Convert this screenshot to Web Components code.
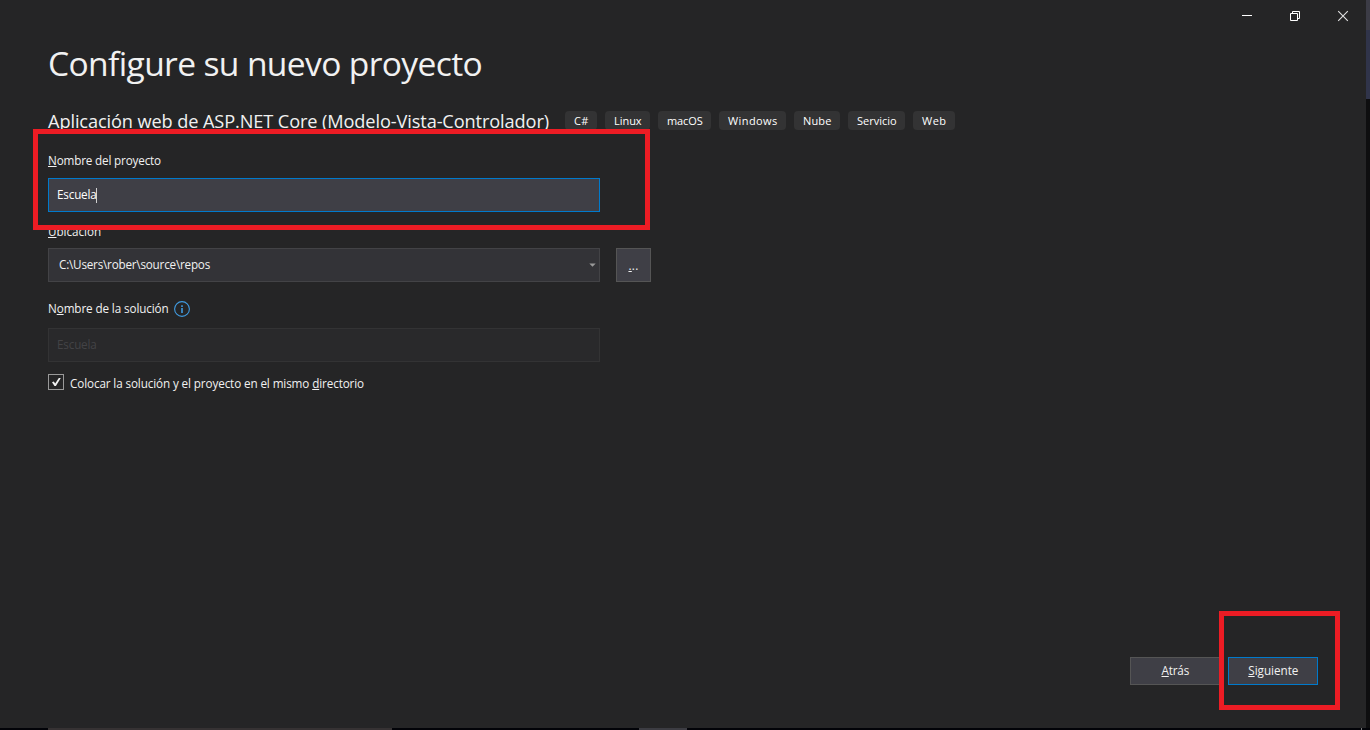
<!DOCTYPE html>
<html lang="es">
<head>
<meta charset="utf-8">
<title>Configure su nuevo proyecto</title>
<style>
html,body{margin:0;height:100%;overflow:hidden;background:#020308}
body{font-family:"Open Sans","Noto Sans",sans-serif;font-size:11.7px;line-height:16px;color:#f1f1f1}
u{text-decoration-thickness:1px;text-underline-offset:1px;text-decoration-skip-ink:none}
</style>
</head>
<body>
<desktop-frame>
<project-dialog>
  <window-controls slot="controls"></window-controls>
  <fit-text slot="title" width="433.5">Configure su nuevo proyecto</fit-text>
  <fit-text slot="subtitle" width="500.4">Aplicación web de ASP.NET Core (Modelo-Vista-Controlador)</fit-text>
  <tag-chip slot="tags" style="width:32px"><fit-text width="14">C#</fit-text></tag-chip>
  <tag-chip slot="tags" style="width:45px"><fit-text width="27">Linux</fit-text></tag-chip>
  <tag-chip slot="tags" style="width:53px"><fit-text width="35">macOS</fit-text></tag-chip>
  <tag-chip slot="tags" style="width:67px"><fit-text width="49">Windows</fit-text></tag-chip>
  <tag-chip slot="tags" style="width:46px"><fit-text width="28">Nube</fit-text></tag-chip>
  <tag-chip slot="tags" style="width:57px"><fit-text width="39">Servicio</fit-text></tag-chip>
  <tag-chip slot="tags" style="width:42px"><fit-text width="24">Web</fit-text></tag-chip>

  <form-field style="--gap:9px">
    <fit-text slot="label" width="112.4"><u>N</u>ombre del proyecto</fit-text>
    <text-box focused><fit-text width="39">Escuela</fit-text></text-box>
  </form-field>
  <form-field style="--gap:8px;margin-top:12px">
    <fit-text slot="label" width="52.5"><u>U</u>bicación</fit-text>
    <text-box combo><fit-text width="150.4">C:\Users\rober\source\repos</fit-text></text-box>
    <push-button style="width:35px;height:34px;letter-spacing:.3px"><u>.</u>..</push-button>
  </form-field>
  <form-field style="--gap:11px;margin-top:19px">
    <fit-text slot="label" width="120">N<u>o</u>mbre de la solución</fit-text>
    <info-icon slot="label"></info-icon>
    <text-box disabled><fit-text width="39">Escuela</fit-text></text-box>
  </form-field>
  <check-box><fit-text width="293.4">Colocar la solución y el proyecto en el mismo <u>d</u>irectorio</fit-text></check-box>

  <push-button slot="actions"><fit-text width="27"><u>A</u>trás</fit-text></push-button>
  <push-button slot="actions" primary><fit-text width="49.5"><u>S</u>iguiente</fit-text></push-button>
</project-dialog>
</desktop-frame>
<highlight-box style="left:33px;top:129px;width:617px;height:101px"></highlight-box>
<highlight-box style="left:1219px;top:611px;width:121px;height:99px"></highlight-box>

<script>
function define(name, html, setup) {
  customElements.define(name, class extends HTMLElement {
    connectedCallback() {
      if (this.shadowRoot) return;
      this.attachShadow({mode: 'open'}).innerHTML = html;
      if (setup) setup(this);
    }
  });
}

define('desktop-frame', `<style>
:host{display:grid;grid-template:728px 2px/1366px 4px;width:1370px;height:730px}
.side{display:grid;grid-template-rows:30px 69px 1fr}
.side i:nth-child(1){background:#3c3c46}.side i:nth-child(2){background:#30344a}.side i:nth-child(3){background:#0e0e0f}
.bar{grid-column:1/3;display:grid;grid-template-columns:48px 344px 247px 48px 674px 1px 1fr}
.bar i:nth-child(2){background:#363233}.bar i:nth-child(4){background:#3c3c42}.bar i:nth-child(6){background:#77777a}
</style><slot></slot><div class="side"><i></i><i></i><i></i></div>
<div class="bar"><i></i><i></i><i></i><i></i><i></i><i></i><i></i></div>`);

define('project-dialog', `<style>
:host{display:flex;flex-direction:column;box-sizing:border-box;height:728px;background:#252526;padding:0 48px 43px}
header{display:flex;justify-content:flex-end;height:32px;margin-right:-45px}
h1{margin:11px 0 0;font-size:33.6px;line-height:40px;font-weight:400}
.sub{display:flex;align-items:flex-start;height:28px;margin:24px 0 18px}
h2{margin:0 16px 0 0;font-size:18.2px;line-height:28px;font-weight:400;width:501px}
.tags{display:flex;gap:8px;padding-top:4px}
footer{display:flex;justify-content:flex-end;gap:8px;margin-top:auto}
</style><header><slot name="controls"></slot></header><h1><slot name="title"></slot></h1>
<div class="sub"><h2><slot name="subtitle"></slot></h2><div class="tags"><slot name="tags"></slot></div></div>
<slot></slot><footer><slot name="actions"></slot></footer>`);

// Tracks a run of text so that it spans the given width.
define('fit-text', `<style>:host{display:inline-block;white-space:pre}
span{display:inline-block;transform:translateY(calc(-1*var(--lift,0px)))}</style><span><slot></slot></span>`, el => {
  const span = el.shadowRoot.querySelector('span');
  const width = +el.getAttribute('width');
  requestAnimationFrame(() => {
    const count = el.textContent.length;
    span.style.letterSpacing = ((width + .6 - span.getBoundingClientRect().width) / count).toFixed(3) + 'px';
    el.style.width = width + 'px';
  });
});

define('window-controls', `<style>:host{display:flex}svg{width:48px;height:32px;display:block}</style>
<svg viewBox="0 0 48 32"><path d="M23 15.5h10" stroke="#fff"/></svg>
<svg viewBox="0 0 48 32" fill="none" stroke="#fff"><path d="M23.5 13.5h7v7h-7zM25.5 13.5v-2h7v7h-2"/></svg>
<svg viewBox="0 0 48 32"><path d="M23.2 11.2l9.6 9.6M32.8 11.2l-9.6 9.6" stroke="#e2e2e2" stroke-width="1.1"/></svg>`);

define('tag-chip', `<style>:host{display:flex;justify-content:center;align-items:center;height:19px;border-radius:4px;background:#333334;font-size:11px;color:#fff}</style><slot></slot>`);

define('form-field', `<style>:host{display:block;--lift:1px}
.label{display:flex;gap:6px;height:16px;margin-bottom:var(--gap)}.row{display:flex;gap:16px}</style>
<div class="label"><slot name="label"></slot></div><div class="row"><slot></slot></div>`);

define('text-box', `<style>
:host{display:flex;align-items:center;box-sizing:border-box;width:552px;height:34px;padding:0 8px;border:1px solid #434346;background:#333337}
:host([focused]){background:#3f3f46;border-color:#007acc;color:#fff}
:host([combo]){padding:0 3px 0 10px}
:host([disabled]){background:#29292b;border-color:#333334;color:#434346}
.caret{display:none;width:1px;height:15px;background:#d0d0d0}:host([focused]) .caret{display:block}
svg{display:none;margin-left:auto}:host([combo]) svg{display:block}
</style><slot></slot><span class="caret"></span><svg width="7" height="4"><path d="M.3.5h6.4L3.5 3.7z" fill="#999"/></svg>`);

define('push-button', `<style>
:host{display:flex;justify-content:center;align-items:center;box-sizing:border-box;width:90px;height:28px;border:1px solid #555;background:#3f3f46;--lift:1px}
:host([primary]){border-color:#007acc}</style><span><slot></slot></span>`);

define('info-icon', `<style>:host{display:block;width:16px;height:16px}svg{display:block}</style>
<svg width="16" height="16"><circle cx="8" cy="8" r="7.4" fill="none" stroke="#409be0" stroke-width="1.1"/><path d="M7.2 4.3h1.6v1.6H7.2zM7.2 7h1.6v5H7.2z" fill="#409be0"/></svg>`);

define('check-box', `<style>:host{display:flex;gap:6px;margin-top:12px;height:18px;--lift:1px}
.box{width:14px;height:14px;border:1px solid #999}.text{padding-top:2px}svg{display:block}</style>
<span class="box"><svg width="14" height="14"><path d="M3 7.2l1.8-.6 1.4 1.9L9.8 3h2L6.9 11H5.5z" fill="#f1f1f1"/></svg></span><span class="text"><slot></slot></span>`);

define('highlight-box', `<style>:host{position:absolute;box-sizing:border-box;border:5px solid #ed1c24}</style>`);
</script>
</body>
</html>
